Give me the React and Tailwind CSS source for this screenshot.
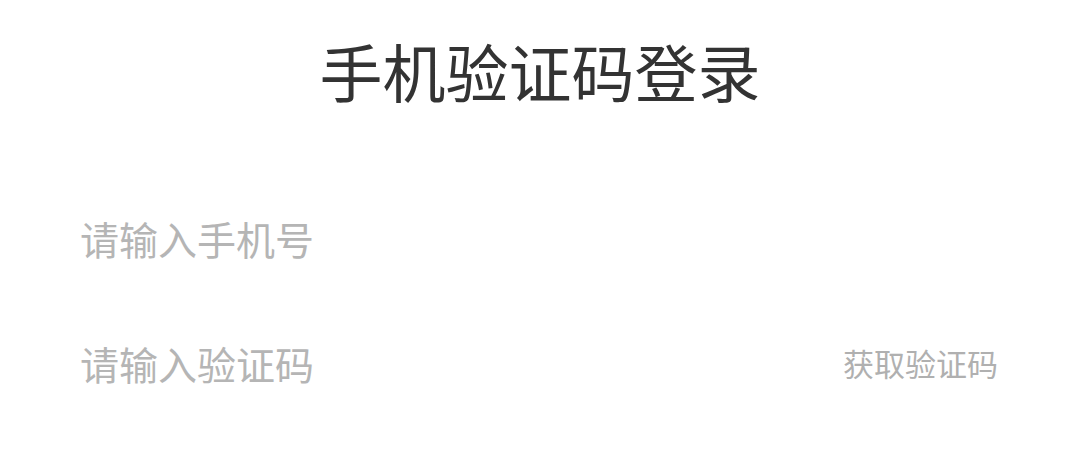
import React from 'react';

const font = { fontFamily: '"Noto Sans CJK SC", "Noto Sans", sans-serif' };

const Row = ({ placeholder, action }) => (
  <div className="flex items-center h-[125px]">
    <input
      type="text"
      placeholder={placeholder}
      className="flex-1 min-w-0 bg-transparent outline-none text-[39px] text-[#333] placeholder:text-[#b5b5b5]"
      style={font}
    />
    {action && (
      <button className="text-[31px] text-[#b0b0b0] shrink-0" style={font}>
        {action}
      </button>
    )}
  </div>
);

export default function App() {
  return (
    <div className="w-[1080px] h-[473px] bg-white overflow-hidden" style={font}>
      <h1 className="pt-[38px] text-center text-[63px] leading-none text-[#333] font-normal">
        手机验证码登录
      </h1>
      <div className="mt-[75px] pl-[80px] pr-[82px]">
        <Row placeholder="请输入手机号" />
        <Row placeholder="请输入验证码" action="获取验证码" />
      </div>
    </div>
  );
}
